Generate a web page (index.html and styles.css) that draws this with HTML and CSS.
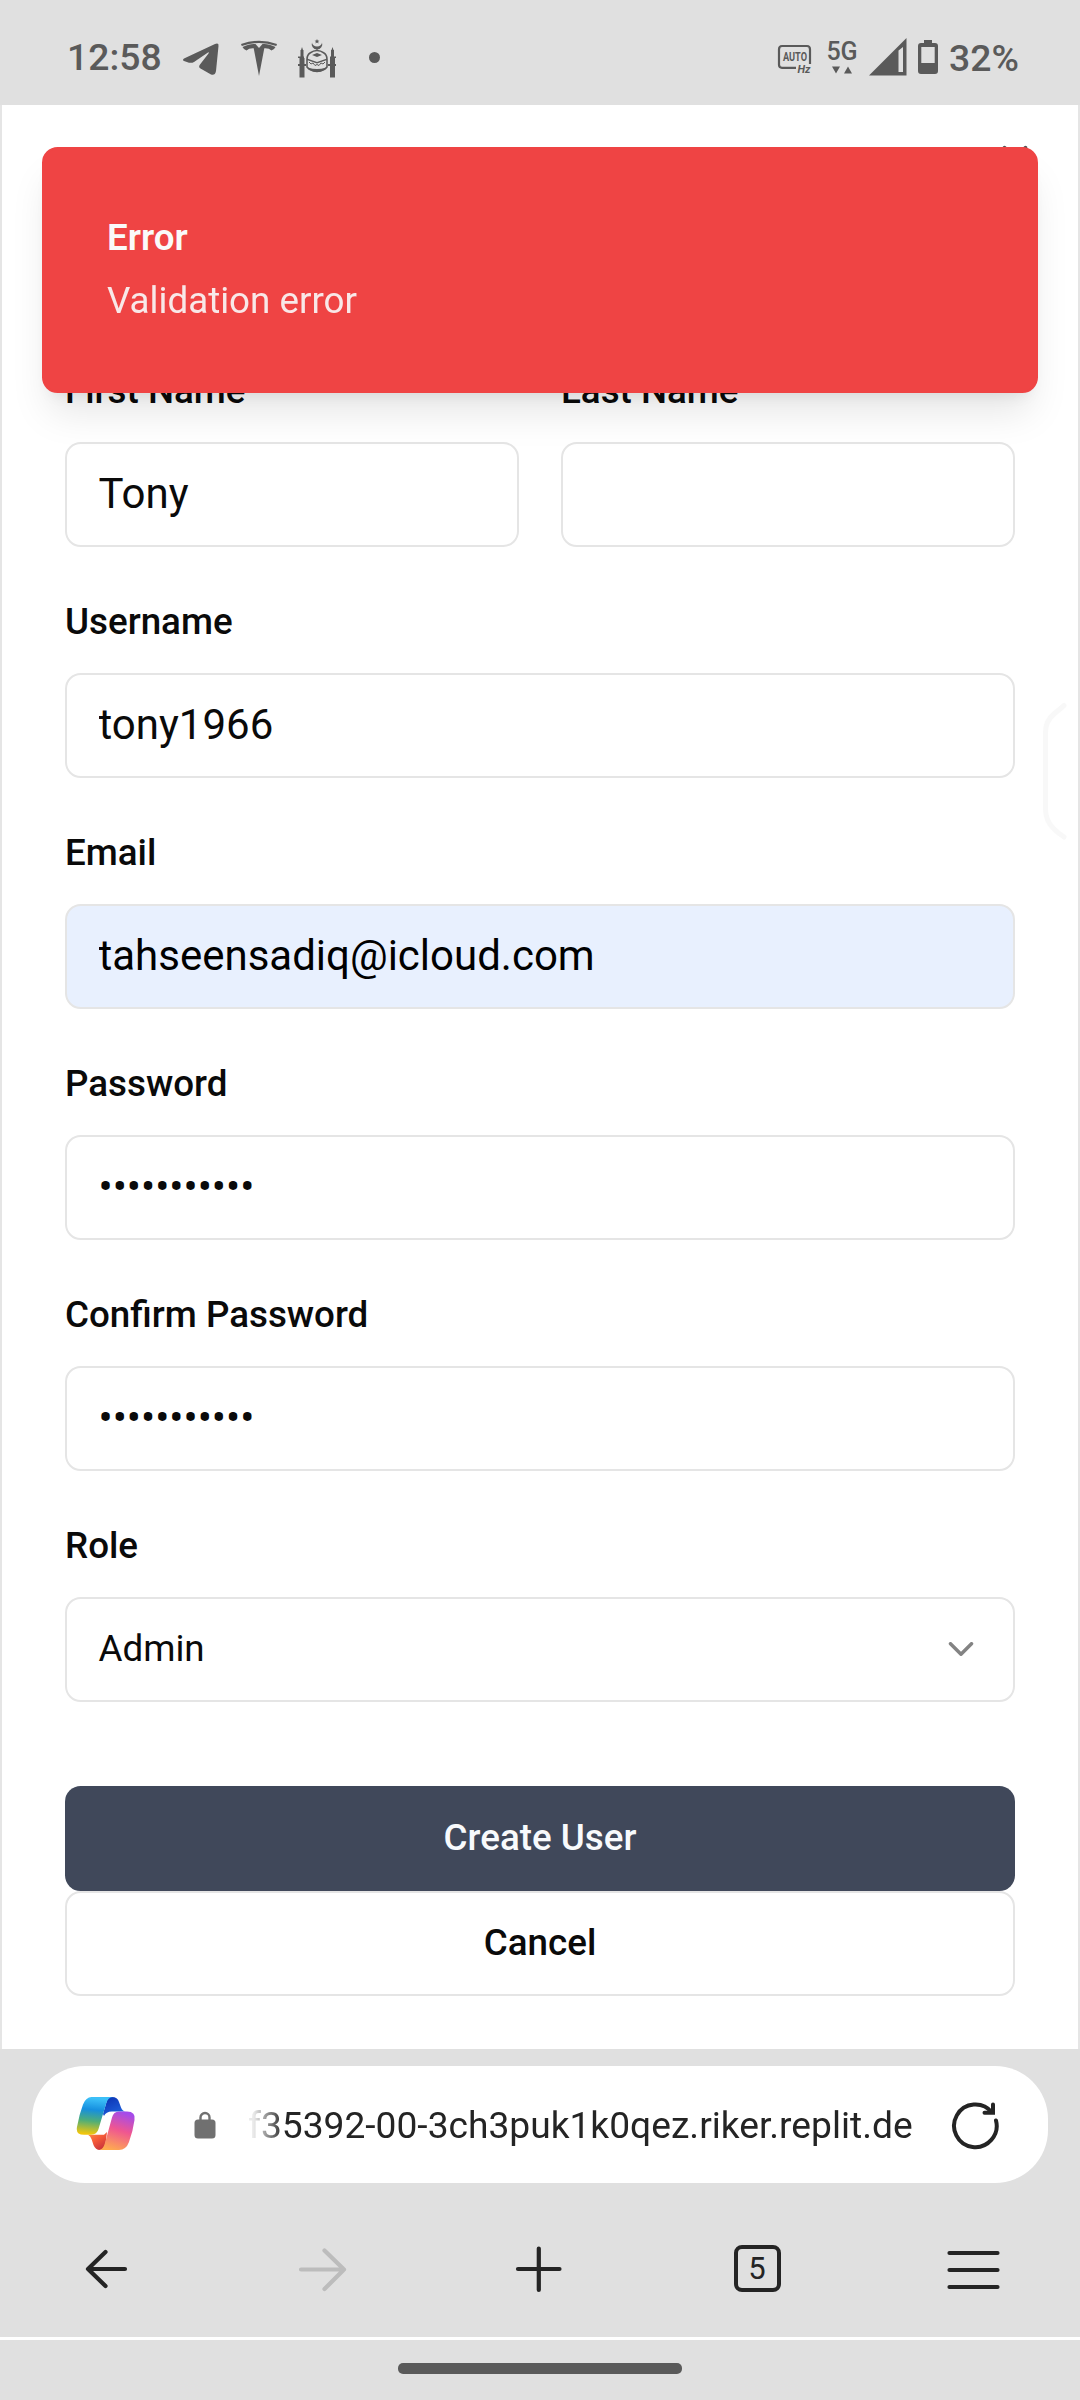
FILE: index.html
```html
<!DOCTYPE html>
<html lang="en">
<head>
<meta charset="utf-8">
<title>Create User</title>
<link rel="stylesheet" href="styles.css">
</head>
<body>
<div class="screen">
  <header class="status-bar">
    <div class="status-left">
      <span class="clock">12:58</span>
      <svg class="ico-telegram" width="38" height="34" viewBox="0 0 38 34"><path d="M2 16.500 L33 2 Q37 0.500 36.500 4 L34 29 Q33 34 29 32.500 L18.500 26.500 Q16 25 18 22.500 L26.500 11.500 Q27.500 9.800 26 10.500 L12 20 Q10 21.200 7 20.700 L2 19 Q0 18 2 16.500Z"/></svg>
      <svg class="ico-tesla" width="38" height="38" viewBox="0 0 38 38"><path d="M1 5 Q19 -1.500 37 5 L36.300 7 Q19 1 1.800 7Z"/><path d="M2.500 8 Q10 4.300 15.500 5 L19 9 L22.500 5 Q28 4.300 35.500 8 Q34 11 31.500 11.500 Q29 9 24.300 9.300 L19 37 L13.700 9.300 Q9 9 6.500 11.500 Q4 11 2.500 8Z"/></svg>
      <svg class="ico-mosque" width="40" height="40" viewBox="0 0 40 40"><path d="M20 1l.7 1.600 1.700.1-1.300 1.100.5 1.700-1.600-1-1.600 1 .5-1.700-1.300-1.100 1.700-.1z"/><path d="M15 4.500a5.300 5.300 0 1 0 10 0a5 4 0 0 1-10 0z"/><path d="M19.500 9h1v3h-1zM2.500 20h5v19.500h-5zM33 20h5v19.500h-5zM1 18.500h6v1.500H1zM33 18.500h6v1.500h-6zM1 26h8v2H1zM31 26h8v2h-8zM3.500 12h3v7h-3zM34 12h3v7h-3zM5 9l1 3H4zM35.500 9l1 3h-2z"/><path d="M10 21.500 Q10 17 13 15 Q20 10 27 15 Q30 17 30 21.500 V29 Q27 33 20 33.500 Q13 33 10 29Z" fill="none" stroke="#5a5a5a" stroke-width="1.600"/><path d="M15 17l5-2 5 2-5 2zM10 20.500l10 3.500 10-3.500v1.600l-10 3.500-10-3.500zM11 29.500q9 3 18 0-3 4.500-9 4.500t-9-4.500z"/><path d="M12 24l2 2 2-1 2 2.500 2-1 2 1 2-2.500 2 1 2-2" fill="none" stroke="#5a5a5a" stroke-width="1"/></svg>
      <span class="dot"></span>
    </div>
    <div class="status-right">
      <svg class="ico-hz" width="36" height="36" viewBox="0 0 36 36"><path d="M19 24.800H5Q2 24.800 2 21.800V6.500Q2 3 5 3H30Q33 3 33 6.500V21" fill="none" stroke="#5a5a5a" stroke-width="2.200"/><text x="6" y="18" class="hz-auto" textLength="24" lengthAdjust="spacingAndGlyphs">AUTO</text><text x="20.500" y="30" class="hz-unit" textLength="13" lengthAdjust="spacingAndGlyphs">Hz</text></svg>
      <div class="network"><span>5G</span><svg width="22" height="8" viewBox="0 0 22 8"><path d="M1 .5h8l-4 7zM13 7.500h8l-4-7z"/></svg></div>
      <svg class="ico-signal" width="38" height="38" viewBox="0 0 38 38"><path fill-rule="evenodd" d="M37.500 0V37.500H0ZM29.500 12.500V34H34V9Z"/></svg>
      <svg class="ico-battery" width="20" height="34" viewBox="0 0 20 34"><path fill-rule="evenodd" d="M6 0h8v3h3q3 0 3 3v25q0 3-3 3H3q-3 0-3-3V6q0-3 3-3h3ZM3.300 7v16h13.400V7Z"/></svg>
      <span class="battery-text">32%</span>
    </div>
  </header>

  <main class="dialog">
    <svg class="close" viewBox="0 0 24 24"><path d="M18 6 6 18M6 6l12 12"/></svg>
    <div class="toast">
      <div class="toast-title">Error</div>
      <div class="toast-text">Validation error</div>
    </div>
    <form class="form">
      <div class="columns">
        <div class="field"><label>First Name</label><input class="control" type="text" value="Tony"></div>
        <div class="field"><label>Last Name</label><input class="control" type="text" value=""></div>
      </div>
      <div class="field"><label>Username</label><input class="control" type="text" value="tony1966"></div>
      <div class="field"><label>Email</label><input class="control filled" type="text" value="tahseensadiq@icloud.com"></div>
      <div class="field"><label>Password</label><input class="control" type="password" value="abcdefghijk"></div>
      <div class="field"><label>Confirm Password</label><input class="control" type="password" value="abcdefghijk"></div>
      <div class="field"><label>Role</label>
        <div class="control select"><span>Admin</span><svg viewBox="0 0 24 24"><path d="m6 9 6 6 6-6"/></svg></div>
      </div>
      <div class="actions">
        <button type="button" class="btn primary">Create User</button>
        <button type="button" class="btn outline">Cancel</button>
      </div>
    </form>
    <svg class="edge-handle" width="26" height="140" viewBox="0 0 26 140"><path d="M22 4.500L12 13Q3.500 20 3.500 31V108Q3.500 120 12 128Q16 132 22 136"/></svg>
  </main>

  <footer class="browser">
    <div class="url-bar">
      <svg class="copilot" width="60" height="56" viewBox="0 0 60 56">
        <defs>
          <linearGradient id="a" x1=".1" y1="0" x2="0" y2="1"><stop offset="0" stop-color="#3cc0f8"/><stop offset=".3" stop-color="#168fdf"/><stop offset=".6" stop-color="#4fae78"/><stop offset=".95" stop-color="#f2c60c"/></linearGradient>
          <linearGradient id="b" x1="0" y1="0" x2=".6" y2="1"><stop offset="0" stop-color="#0a2fb0"/><stop offset="1" stop-color="#1f62dd"/></linearGradient>
          <linearGradient id="c" x1=".6" y1="0" x2=".3" y2="1"><stop offset="0" stop-color="#a44bea"/><stop offset=".45" stop-color="#ef5691"/><stop offset="1" stop-color="#ffad4e"/></linearGradient>
          <linearGradient id="d" x1="0" y1="0" x2=".7" y2="1"><stop offset="0" stop-color="#ff9248"/><stop offset=".5" stop-color="#f55a38"/><stop offset="1" stop-color="#c8323c"/></linearGradient>
        </defs>
        <path fill="url(#b)" d="M32 1H36Q41.500 1 43 6L45 11.500Q46.500 15.500 50 15.500H36Q30 15.500 28 20L27 18Z"/>
        <path fill="url(#d)" d="M31 36L28 38.700H12Q14.500 40 15.500 43L17.500 49Q19.500 54 24 54L29 52Z"/>
        <path fill="url(#a)" d="M15.500 1H37Q32 1 30 8L22.500 33Q21 38.700 15 38.700H8Q-.5 38.700 1 31Q3 19 7 8.500Q10 1 15.500 1Z"/>
        <path fill="url(#c)" d="M43 15.500H51Q60 15.500 58.500 24Q57 35 53 46Q50 54 43 54H23Q27 54 29 47L36 21.500Q37.500 15.500 43 15.500Z"/>
      </svg>
      <svg class="lock" width="22" height="28" viewBox="0 0 22 28"><path d="M6.500 10V6.500a4.500 4.500 0 0 1 9 0V10" fill="none" stroke="#707070" stroke-width="2.400"/><rect x=".5" y="8.500" width="21" height="19" rx="3.500" fill="#707070"/></svg>
      <span class="url">f35392-00-3ch3puk1k0qez.riker.replit.de</span>
      <svg class="reload" width="52" height="52" viewBox="0 0 52 52"><path d="M47 21.500A21.300 21.300 0 1 1 43 13.500M44 5.500V13.800H35.500"/></svg>
    </div>
    <nav class="toolbar">
      <svg width="56" height="56" viewBox="0 0 56 56"><path d="M47 28H10M27.500 11L10 28L27.500 45"/></svg>
      <svg class="disabled" width="56" height="56" viewBox="0 0 56 56"><path d="M6 28.500H49M29.500 9.500L49 28.500L29.500 48"/></svg>
      <svg width="56" height="56" viewBox="0 0 56 56"><path d="M6 28H47.500M26.800 7.500V49"/></svg>
      <span class="tabs">5</span>
      <svg width="56" height="56" viewBox="0 0 56 56"><path d="M3.500 12H51.500M3.500 29H51.500M3.500 46H51.500"/></svg>
    </nav>
    <div class="gesture"><span></span></div>
  </footer>
</div>
</body>
</html>
```
FILE: styles.css
```css
* { box-sizing: border-box; }
body { margin: 0; font-family: Roboto, sans-serif; }
svg { display: block; flex: none; }
.screen { width: 1080px; height: 2400px; display: flex; flex-direction: column; background: #fff; overflow: hidden; }

/* Status bar */
.status-bar { height: 105px; background: #e0e0e0; color: #5a5a5a; display: flex; justify-content: space-between; padding: 0 62px 0 67px; flex: none; }
.status-bar svg { fill: #5a5a5a; }
.status-left, .status-right { display: flex; align-items: flex-start; }
.clock, .battery-text { font-size: 37.300px; line-height: 44px; font-weight: 480; white-space: nowrap; }
.clock { margin-top: 35px; width: 115px; }
.ico-telegram { margin-top: 42px; }
.ico-tesla { margin: 39px 0 0 20px; }
.ico-mosque { margin: 38px 0 0 19px; }
.dot { width: 11px; height: 11px; border-radius: 50%; background: #5a5a5a; margin: 52px 0 0 32px; }
.ico-hz { margin-top: 43px; }
.hz-auto { font-size: 12.500px; font-weight: 700; }
.hz-unit { font-size: 11.500px; font-weight: 700; font-style: italic; }
.network { margin: 38px 0 0 14px; width: 30px; display: flex; flex-direction: column; align-items: center; font-size: 25px; line-height: 28px; font-weight: 480; }
.ico-signal { margin: 38px 0 0 12px; }
.ico-battery { margin: 40px 0 0 11px; }
.battery-text { margin: 36px 0 0 11px; width: 69px; }

/* Dialog */
.dialog { position: relative; height: 1944px; flex: none; border: solid #e5e5e5; border-width: 0 2px; padding: 253px 63px 0; color: #0a0a0a; }
.close { position: absolute; right: 42px; top: 32px; width: 42px; height: 42px; fill: none; stroke: #0a0a0a; stroke-width: 2; stroke-linecap: round; opacity: .7; }
.toast { position: absolute; z-index: 2; left: 40px; top: 42px; width: 996px; height: 245.500px; padding: 63px; border: 2px solid #ef4444; border-radius: 15.750px; background: #ef4444; color: #fafafa; box-shadow: 0 26.250px 39.400px -7.900px rgba(0,0,0,.1), 0 10.500px 15.750px -10.500px rgba(0,0,0,.1); display: flex; flex-direction: column; gap: 10.500px; font-size: 36.750px; line-height: 52.500px; }
.toast-title { font-weight: 600; }
.toast-text { opacity: .9; }
.form { display: flex; flex-direction: column; gap: 42px; }
.columns { display: grid; grid-template-columns: 1fr 1fr; gap: 42px; }
.field { display: flex; flex-direction: column; gap: 21px; min-width: 0; }
label { height: 63px; padding-top: 1px; font-size: 36.750px; line-height: 63px; font-weight: 500; }
.control { display: block; width: 100%; height: 105px; border: 2px solid #e5e5e5; border-radius: 15.750px; background: #fff; color: #0a0a0a; font-family: Roboto, sans-serif; font-size: 42px; padding: 0 31.500px 2px; margin: 0; outline: none; }
.filled { background: #e8f0fe; color: #000; }
.select { display: flex; align-items: center; justify-content: space-between; font-size: 36.750px; }
.select svg { width: 42px; height: 42px; fill: none; stroke: currentColor; stroke-width: 2; stroke-linecap: round; stroke-linejoin: round; opacity: .5; }
.actions { display: flex; flex-direction: column; margin-top: 42px; }
.btn { height: 105px; border-radius: 15.750px; border: 0; padding: 0; font: 500 36.750px/52.500px Roboto, sans-serif; }
.primary { background: #40485a; color: #f8fafc; }
.outline { background: #fff; color: #0a0a0a; border: 2px solid #e5e5e5; }
.edge-handle { position: absolute; left: 1040px; top: 596px; fill: none; stroke: #f8f8f8; stroke-width: 5; stroke-linecap: round; }

/* Browser controls */
.browser { flex: 1; background: #e0e0e0; display: flex; flex-direction: column; }
.url-bar { margin: 17px 32px 0; height: 117px; flex: none; border-radius: 53px; background: #fff; display: flex; align-items: center; padding: 0 47px 0 44px; }
.copilot { margin-bottom: 2px; }
.lock { margin-left: 58px; }
.url { margin-left: 32px; padding-top: 3px; width: 676px; font-size: 37.170px; line-height: 44px; color: #242424; white-space: nowrap; -webkit-mask-image: linear-gradient(90deg, rgba(0,0,0,.1) 6px, #000 36px); mask-image: linear-gradient(90deg, rgba(0,0,0,.1) 6px, #000 36px); }
.reload { margin-left: auto; fill: none; stroke: #242424; stroke-width: 4; stroke-linecap: round; }
.toolbar { height: 154px; flex: none; display: grid; grid-template-columns: repeat(5, 217px); align-items: center; justify-content: center; justify-items: center; padding-top: 17px; }
.toolbar svg { fill: none; stroke: #242424; stroke-width: 4.200; stroke-linecap: round; stroke-linejoin: round; }
.toolbar .disabled { stroke: #bcbcbc; }
.tabs { width: 47px; height: 47px; border: 4px solid #242424; border-radius: 8px; display: flex; align-items: center; justify-content: center; font-size: 31px; line-height: 36px; color: #242424; }
.gesture { flex: 1; border-top: 3px solid #fff; padding-top: 23px; display: flex; justify-content: center; align-items: flex-start; }
.gesture span { width: 284px; height: 11px; border-radius: 5px; background: #5a5a5a; }
```
